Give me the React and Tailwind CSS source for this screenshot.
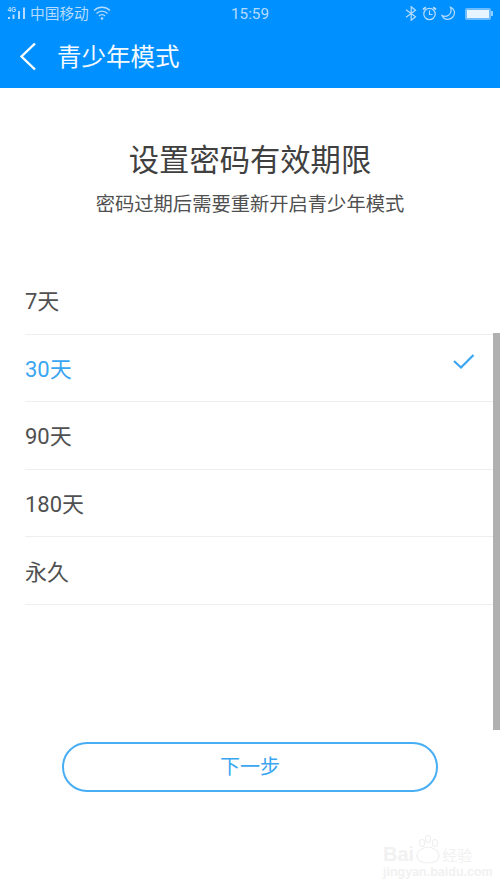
const font = "font-['Roboto','Noto_Sans_CJK_SC',sans-serif]";

const options = ['7天', '30天', '90天', '180天', '永久'];

function StatusBar() {
  return (
    <div className="flex h-[27px] items-center justify-between pl-[7px] pr-[7px] text-[#b5dcff]">
      <div className="flex w-[190px] items-center">
        <svg width="22" height="16" viewBox="0 0 22 16" fill="currentColor">
          <rect x="1" y="12" width="2" height="2" />
          <rect x="5.500" y="9.500" width="2" height="4.500" />
          <rect x="11" y="6" width="2" height="8" />
          <rect x="16" y="2.500" width="2" height="11.500" />
          <text x="0.500" y="6.500" fontSize="6.500" fontWeight="700" fontFamily="Liberation Sans">4G</text>
        </svg>
        <span className="ml-[1px] pt-[2px] text-[14.700px] leading-none">中国移动</span>
        <svg className="ml-[4px]" width="18" height="14" viewBox="0 0 18 14" fill="none" stroke="currentColor" strokeWidth="1.300">
          <path d="M1 4.500a11.500 11.500 0 0 1 16 0" />
          <path d="M3.500 7.500a7.500 7.500 0 0 1 11 0" />
          <path d="M6 10a4 4 0 0 1 6 0" />
          <circle cx="9" cy="12.500" r="0.700" fill="currentColor" />
        </svg>
      </div>
      <span className="pt-[2px] text-[15.300px] leading-none">15:59</span>
      <div className="flex w-[190px] items-center justify-end">
        <svg width="12" height="15" viewBox="0 0 12 15" fill="none" stroke="currentColor" strokeWidth="1.200">
          <path d="M1 3.800l9.500 7-4.300 3.500V.7l4.300 3.500-9.500 7" />
        </svg>
        <svg className="ml-[5px]" width="15" height="15" viewBox="0 0 15 15" fill="none" stroke="currentColor" strokeWidth="1.200">
          <circle cx="7.500" cy="8" r="5.700" />
          <path d="M7.500 4.500V8.500H10.500" />
          <path d="M1 3.500l2.800-2.300M14 3.500l-2.800-2.300" strokeWidth="1.800" />
        </svg>
        <svg className="ml-[4px] mr-[9px]" width="15" height="15" viewBox="0 0 15 15" fill="none" stroke="currentColor" strokeWidth="1.200">
          <path d="M9.500 1.200c1.300 3.500.2 6.500-2 8-2 1.300-4.500 1.300-6.500.3 1 2.500 3.500 4 6.200 3.800 3.500-.3 6.300-3 6.300-6.500 0-2.500-1.500-4.500-4-5.600z" />
        </svg>
        <div className="flex items-center">
          <div className="h-[12px] w-[26px] rounded-[2px] border-2 border-[#6dbcff] bg-[#e6f4ff]" />
          <div className="h-[5px] w-[2px] bg-[#8fccff]" />
        </div>
      </div>
    </div>
  );
}

function Watermark() {
  return (
    <div className="absolute left-[383px] top-[835px] flex w-[92px] flex-col font-['Liberation_Sans',sans-serif] text-[#f1f1f1]">
      <div className="flex h-[29px] items-end">
        <span className="text-[20px] font-bold leading-none">Bai</span>
        <svg className="ml-[1px]" width="26" height="29" viewBox="0 0 26 29" fill="none" stroke="#efefef" strokeWidth="1.200">
          <ellipse cx="7" cy="8" rx="2.500" ry="3.500" />
          <ellipse cx="13" cy="4" rx="2.500" ry="3.500" />
          <ellipse cx="20" cy="8" rx="2.500" ry="3.500" />
          <path d="M2 21c0-5 6-9 11-9s11 4 11 9c0 4-4 7-11 7S2 25 2 21z" />
        </svg>
        <span className={`ml-[1px] text-[15px] leading-none ${font}`}>经验</span>
      </div>
      <span className="mt-[2px] text-[12.500px] font-bold leading-[12px]">jingyan.baidu.com</span>
    </div>
  );
}

export default function App() {
  return (
    <div className={`relative flex h-[889px] w-[500px] flex-col overflow-hidden bg-white ${font}`}>
      <header className="h-[88px] bg-[#0090ff]">
        <StatusBar />
        <div className="flex h-[61px] items-center pb-[3px] pl-[19px] text-white">
          <svg width="18" height="29" viewBox="0 0 18 29" fill="none" stroke="currentColor" strokeWidth="2.400">
            <path d="M16 1.500L2.500 14.500L16 27.500" />
          </svg>
          <h1 className="ml-[20px] pt-[4px] text-[24.500px] leading-none text-[#f4faff]">青少年模式</h1>
        </div>
      </header>

      <div className="mt-[53px] text-center">
        <h2 className="text-[30.300px] leading-[40px] text-[#404040]">设置密码有效期限</h2>
        <p className="mt-[11px] text-[19.300px] leading-[26px] text-[#505050]">密码过期后需要重新开启青少年模式</p>
      </div>

      <ul className="ml-[25px] mt-[49px]">
        {options.map((label, i) => (
          <li
            key={label}
            className={`flex h-[67.600px] items-center justify-between border-b border-[#eeeeee] pr-[25px] pt-[3px] text-[22px] ${i === 1 ? 'text-[#3aa5f0]' : 'text-[#505050]'}`}
          >
            {label}
            {i === 1 && (
              <svg className="mb-[14px]" width="22" height="16" viewBox="0 0 22 16" fill="none" stroke="#3aa5f0" strokeWidth="2.200">
                <path d="M1 7l7 6.500L20.500 1" />
              </svg>
            )}
          </li>
        ))}
      </ul>

      <button className="mx-auto mt-[137px] h-[50px] w-[376px] rounded-full border-2 border-[#48aef4] pt-[1px] text-[20px] text-[#3aa5f0]">
        下一步
      </button>

      {/* scrollbar */}
      <div className="absolute right-0 top-[333px] h-[397px] w-[7px] bg-[#b0b0b0]" />

      <Watermark />
    </div>
  );
}
